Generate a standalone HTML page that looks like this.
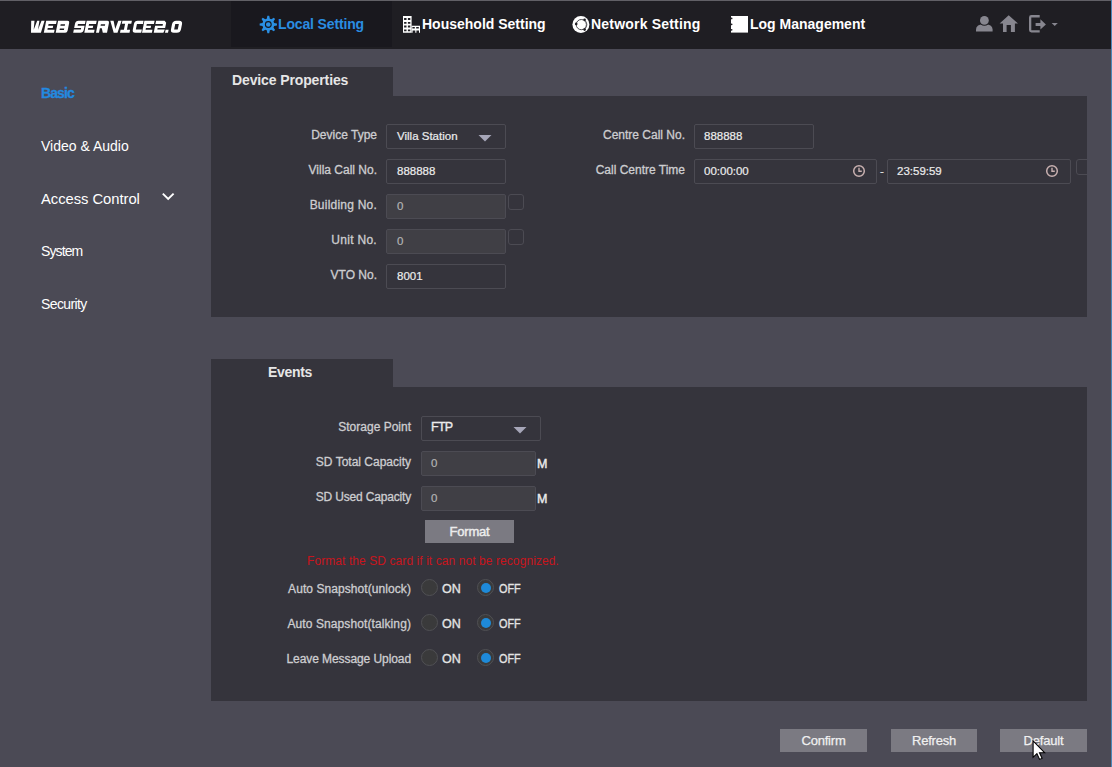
<!DOCTYPE html>
<html><head><meta charset="utf-8">
<style>
*{margin:0;padding:0;box-sizing:border-box;}
html,body{width:1112px;height:767px;overflow:hidden;background:#4b4a55;font-family:"Liberation Sans",sans-serif;}
.a{position:absolute;}
#topline{left:0;top:0;width:1112px;height:1px;background:#616066;}
#rightline{left:1111px;top:0;width:1px;height:767px;background:#4b87b8;}
#hdr{left:0;top:1px;width:1111px;height:48px;background:#1f1e23;}
#act{left:231px;top:1px;width:161px;height:46px;background:#19181e;}
.nav{top:15px;font-size:14px;font-weight:bold;color:#fff;white-space:nowrap;line-height:18px;}
.side{left:41px;font-size:14px;color:#fff;white-space:nowrap;line-height:16px;}
.tab{background:#35343c;}
.card{background:#35343c;}
.ttl{font-size:14px;font-weight:bold;color:#e6e6e6;white-space:nowrap;line-height:16px;}
.lbl{font-size:12px;color:#cdcdd0;white-space:nowrap;text-align:right;line-height:14px;-webkit-text-stroke:0.3px #cdcdd0;}
.inp{border:1px solid #4c4b53;border-radius:2px;background:#35343c;}
.dis{background:#403f45;}
.val{font-size:11.5px;color:#ececec;white-space:nowrap;line-height:14px;-webkit-text-stroke:0.2px #ececec;}
.gval{color:#b4b4b4;-webkit-text-stroke:0.2px #b4b4b4;}
.chk{width:16px;height:16px;border:1px solid #4c4b53;border-radius:3px;}
.btn{background:#7b7a82;color:#f0f0f0;font-size:13px;text-align:center;letter-spacing:-0.2px;-webkit-text-stroke:0.25px #f0f0f0;}
.rad{width:17px;height:17px;border-radius:50%;border:1px solid #505054;background:#3a3a3b;}
.rad.on::after{content:"";position:absolute;left:2.5px;top:2.5px;width:10px;height:10px;border-radius:50%;background:#1e8ad8;}
.rtxt{font-size:12.5px;color:#e4e4e4;line-height:14px;-webkit-text-stroke:0.35px #e4e4e4;}
</style></head><body>
<div class="a" id="hdr"></div>
<div class="a" id="act"></div>
<div class="a" id="topline"></div>
<div class="a" id="rightline"></div>

<!-- logo -->
<svg class="a" style="left:0;top:0;" width="200" height="40"><g fill="#fff" fill-rule="nonzero" transform="matrix(1,0,-0.2,1,2.4,20.7)"><path transform="translate(28.8 0)" d="M0.00 0.00L3.30 0.00L4.30 9.00L6.00 0.00L8.20 0.00L8.60 9.00L10.30 0.00L13.40 0.00L12.10 12.00L2.20 12.00Z"/><path transform="translate(43.8 0)" d="M0.00 0.00H3.00V12.00H0.00ZM0.00 0.00H10.50V3.40H0.00ZM0.00 5.00H8.00V7.30H0.00ZM0.00 9.00H10.20V12.00H0.00Z"/><path transform="translate(55.7 0)" d="M0.00 0.00H9.50Q11.50 0.00 11.50 2.00V10.00Q11.50 12.00 9.50 12.00H0.00V0.00ZM3.30 3.60V5.10H7.70V3.60ZM3.30 7.70V9.20H7.70V7.70Z"/><path transform="translate(73.2 0)" d="M3.00 0.00H10.00V9.00Q10.00 12.00 7.00 12.00H0.00V3.00Q0.00 0.00 3.00 0.00ZM3.00 3.40V5.00H10.00V3.40ZM0.00 7.30V8.90H7.00V7.30Z"/><path transform="translate(84.3 0)" d="M0.00 0.00H3.00V12.00H0.00ZM0.00 0.00H10.00V3.40H0.00ZM0.00 5.00H7.50V7.30H0.00ZM0.00 9.00H9.70V12.00H0.00Z"/><path transform="translate(96 0)" d="M0.00 0.00H9.00Q11.00 0.00 11.00 2.00V12.00H0.00V0.00ZM3.20 3.60V5.10H7.50V3.60ZM3 7.6V12H6.8L4.9 7.6Z"/><path transform="translate(107.9 0)" d="M0.00 0.00L3.30 0.00L6.60 8.20L8.00 0.00L11.30 0.00L9.60 12.00L5.80 12.00Z"/><path transform="translate(120 0)" d="M0.00 0.00H9.50V3.00H0.00ZM3.30 0.00H6.30V12.00H3.30ZM0.00 9.00H9.50V12.00H0.00Z"/><path transform="translate(132.2 0)" d="M3.00 0.00H9.00V12.00H3.00Q0.00 12.00 0.00 9.00V3.00Q0.00 0.00 3.00 0.00ZM3.00 3.20V8.80H9.00V3.20Z"/><path transform="translate(142 0)" d="M0.00 0.00H3.00V12.00H0.00ZM0.00 0.00H10.20V3.40H0.00ZM0.00 5.00H7.70V7.30H0.00ZM0.00 9.00H9.90V12.00H0.00Z"/><path transform="translate(153.7 0)" d="M0.00 0.00L8.50 0.00L10.50 2.00L10.50 8.90L9.70 12.00L0.00 12.00ZM0.00 3.40V5.00H7.50V3.40ZM3.00 7.30V8.90H10.50V7.30Z"/><path transform="translate(165 0)" d="M0.00 9.00H3.00V12.00H0.00Z"/><path transform="translate(170.3 0)" d="M3.50 0.00H6.50Q10.00 0.00 10.00 3.50V8.50Q10.00 12.00 6.50 12.00H3.50Q0.00 12.00 0.00 8.50V3.50Q0.00 0.00 3.50 0.00ZM3.20 3.20V8.80H6.80V3.20Z"/></g></svg>


<!-- header icons -->
<svg class="a" style="left:0;top:0;" width="1112" height="49">
<path d="M266.75 18.70L267.39 15.85L269.21 15.85L269.85 18.70L271.30 19.30L273.78 17.74L275.06 19.02L273.50 21.50L274.10 22.95L276.95 23.59L276.95 25.41L274.10 26.05L273.50 27.50L275.06 29.98L273.78 31.26L271.30 29.70L269.85 30.30L269.21 33.15L267.39 33.15L266.75 30.30L265.30 29.70L262.82 31.26L261.54 29.98L263.10 27.50L262.50 26.05L259.65 25.41L259.65 23.59L262.50 22.95L263.10 21.50L261.54 19.02L262.82 17.74L265.30 19.30Z" fill="#2a8fe4"/>
<circle cx="268.3" cy="24.5" r="2.9" fill="#2a8fe4" stroke="#16161c" stroke-width="1.1"/>
<g fill="#fff">
<path fill-rule="evenodd" d="M403 16H411.6V32.8H403Z M404.1 18.1V19.9H406.5V18.1Z M407.9 18.1V19.9H410.3V18.1Z M404.1 21.9V23.7H406.5V21.9Z M407.9 21.9V23.7H410.3V21.9Z M404.1 25.6V27.4H406.5V25.6Z M407.9 25.6V27.4H410.3V25.6Z M404.1 29.4V31.2H406.5V29.4Z M407.9 29.4V31.2H410.3V29.4Z"/>
<path fill-rule="evenodd" d="M411.6 25.8H420V32.8H419V30.5H416.4V32.8H415.3V30.5H412.6V32.8H411.6Z M412.4 26.9V28.4H414.8V26.9Z M416.2 26.9V28.4H418.8V26.9Z"/>
</g>
<circle cx="580.9" cy="24.4" r="8.5" fill="#fff"/>
<circle cx="581.3" cy="24.6" r="5.1" fill="none" stroke="#3a3a40" stroke-width="0.9"/>
<path d="M584.6 19.7 Q589.2 24.6 584.6 29.6" fill="none" stroke="#55555c" stroke-width="0.8"/>
<circle cx="576.2" cy="23.9" r="1.3" fill="#1f1e23"/>
<circle cx="584.6" cy="19.8" r="1.3" fill="#1f1e23"/>
<circle cx="584.6" cy="29.6" r="1.3" fill="#1f1e23"/>
<path d="M731 16H748V32.6H731Z" fill="#fff"/>
<circle cx="731.6" cy="18.4" r="0.9" fill="#1f1e23"/>
<circle cx="731.6" cy="24.3" r="0.9" fill="#1f1e23"/>
<circle cx="731.6" cy="29.8" r="0.9" fill="#1f1e23"/>
<g fill="#87868f">
<path d="M976 31.4V29.6Q976 24.2 984.3 23.9Q992.6 24.2 992.6 29.6V31.4Z"/>
<circle cx="984.4" cy="20.4" r="5.3" fill="#1f1e23"/>
<circle cx="984.4" cy="20.4" r="4.4"/>
<path d="M1008.7 15.3L1018 23.6H1014.9V32H1010.9V25H1006.6V32H1003V23.6H999.6Z"/>
<path d="M1039.7 15.1H1031.4Q1029 15.1 1029 17.5V30.1Q1029 32.5 1031.4 32.5H1039.7V30.2H1031.3V17.4H1039.7Z"/>
<path d="M1035.6 23.1H1040.4V19.2L1045.9 24.5L1040.4 29.6V26H1035.6Z"/>
<path d="M1051.6 22.9H1057.8L1054.7 26.1Z"/>
</g>
</svg>

<!-- nav -->
<div class="a nav" style="left:278px;color:#2a8de2;letter-spacing:-0.15px;">Local Setting</div>
<div class="a nav" style="left:422px;">Household Setting</div>
<div class="a nav" style="left:591px;letter-spacing:0.2px;">Network Setting</div>
<div class="a nav" style="left:750px;">Log Management</div>

<!-- sidebar -->
<div class="a side" style="top:85px;font-weight:bold;font-size:14px;letter-spacing:-0.9px;color:#2389e0;-webkit-text-stroke:0.3px #2389e0;">Basic</div>
<div class="a side" style="top:138px;">Video &amp; Audio</div>
<div class="a side" style="top:191px;font-size:14.8px;letter-spacing:-0.05px;">Access Control</div>
<svg class="a" style="left:160px;top:190px;" width="16" height="12"><path d="M2.8 3.6 L8.2 9 L13.6 3.6" fill="none" stroke="#fff" stroke-width="1.9"/></svg>
<div class="a side" style="top:243px;letter-spacing:-0.9px;">System</div>
<div class="a side" style="top:296px;letter-spacing:-0.6px;">Security</div>

<!-- card 1 -->
<div class="a tab" style="left:211px;top:67px;width:182px;height:29px;"></div>
<div class="a card" style="left:211px;top:96px;width:876px;height:221px;"></div>
<div class="a ttl" style="left:232px;top:72px;letter-spacing:-0.12px;">Device Properties</div>

<!-- card 2 -->
<div class="a tab" style="left:211px;top:359px;width:182px;height:28px;"></div>
<div class="a card" style="left:211px;top:387px;width:876px;height:314px;"></div>
<div class="a ttl" style="left:268px;top:364px;letter-spacing:-0.3px;">Events</div>


<!-- card1 form -->
<div class="a lbl" style="left:277px;width:100px;top:128px;">Device Type</div>
<div class="a inp" style="left:386px;top:124px;width:120px;height:25px;"></div>
<div class="a val" style="left:397px;top:129px;">Villa Station</div>
<svg class="a" style="left:478px;top:134px;" width="14" height="8"><path d="M0.5 1 L13.5 1 L7 7.5 Z" fill="#a6a6b8"/></svg>

<div class="a lbl" style="left:277px;width:100px;top:163px;">Villa Call No.</div>
<div class="a inp" style="left:386px;top:159px;width:120px;height:25px;"></div>
<div class="a val" style="left:397px;top:164px;">888888</div>

<div class="a lbl" style="left:277px;width:100px;top:198px;letter-spacing:0.22px;">Building No.</div>
<div class="a inp dis" style="left:386px;top:194px;width:120px;height:25px;"></div>
<div class="a val gval" style="left:397px;top:199px;">0</div>
<div class="a chk" style="left:508px;top:194px;"></div>

<div class="a lbl" style="left:277px;width:100px;top:233px;letter-spacing:0.3px;">Unit No.</div>
<div class="a inp dis" style="left:386px;top:229px;width:120px;height:25px;"></div>
<div class="a val gval" style="left:397px;top:234px;">0</div>
<div class="a chk" style="left:508px;top:229px;"></div>

<div class="a lbl" style="left:277px;width:100px;top:268px;">VTO No.</div>
<div class="a inp" style="left:386px;top:264px;width:120px;height:25px;"></div>
<div class="a val" style="left:397px;top:269px;">8001</div>

<div class="a lbl" style="left:565px;width:120px;top:128px;">Centre Call No.</div>
<div class="a inp" style="left:694px;top:124px;width:120px;height:25px;"></div>
<div class="a val" style="left:704px;top:129px;">888888</div>

<div class="a lbl" style="left:565px;width:120px;top:163px;">Call Centre Time</div>
<div class="a inp" style="left:694px;top:159px;width:183px;height:25px;"></div>
<div class="a val" style="left:704px;top:164px;">00:00:00</div>
<svg class="a" style="left:852px;top:164px;" width="14" height="14"><circle cx="7" cy="7" r="5.3" fill="none" stroke="#c8b0b0" stroke-width="1.5"/><path d="M7 3.8 V7.3 H9.8" fill="none" stroke="#c8b0b0" stroke-width="1.4"/></svg>
<div class="a val" style="left:880px;top:164px;color:#ccc;">-</div>
<div class="a inp" style="left:887px;top:159px;width:184px;height:25px;"></div>
<div class="a val" style="left:897px;top:164px;">23:59:59</div>
<svg class="a" style="left:1045px;top:164px;" width="14" height="14"><circle cx="7" cy="7" r="5.3" fill="none" stroke="#c8b0b0" stroke-width="1.5"/><path d="M7 3.8 V7.3 H9.8" fill="none" stroke="#c8b0b0" stroke-width="1.4"/></svg>
<div class="a" style="left:1076px;top:159px;width:11px;height:16px;overflow:hidden;"><div class="a chk" style="left:0;top:0;"></div></div>

<!-- card2 form -->
<div class="a lbl" style="left:291px;width:120px;top:420px;">Storage Point</div>
<div class="a inp" style="left:421px;top:416px;width:120px;height:25px;"></div>
<div class="a val" style="left:431px;top:420px;font-size:12.5px;letter-spacing:-0.7px;-webkit-text-stroke:0.35px #ececec;">FTP</div>
<svg class="a" style="left:513px;top:426px;" width="14" height="8"><path d="M0.5 1 L13.5 1 L7 7.5 Z" fill="#a6a6b8"/></svg>

<div class="a lbl" style="left:291px;width:120px;top:455px;">SD Total Capacity</div>
<div class="a inp dis" style="left:421px;top:451px;width:115px;height:25px;"></div>
<div class="a val gval" style="left:431px;top:456px;">0</div>
<div class="a val" style="left:537px;top:457px;font-size:12.5px;-webkit-text-stroke:0.4px #ececec;">M</div>

<div class="a lbl" style="left:291px;width:120px;top:490px;letter-spacing:-0.17px;">SD Used Capacity</div>
<div class="a inp dis" style="left:421px;top:486px;width:115px;height:25px;"></div>
<div class="a val gval" style="left:431px;top:491px;">0</div>
<div class="a val" style="left:537px;top:492px;font-size:12.5px;-webkit-text-stroke:0.4px #ececec;">M</div>

<div class="a btn" style="left:425px;top:520px;width:89px;height:23px;line-height:23px;letter-spacing:-0.2px;-webkit-text-stroke:0.45px #ececec;color:#ececec;">Format</div>
<div class="a" style="left:307px;top:554px;font-size:12px;letter-spacing:0.08px;color:#c8141c;white-space:nowrap;line-height:14px;">Format the SD card if it can not be recognized.</div>

<div class="a lbl" style="left:211px;width:200px;top:582px;letter-spacing:0.07px;">Auto Snapshot(unlock)</div>
<div class="a rad" style="left:421px;top:579px;"></div><div class="a rtxt" style="left:442px;top:582px;">ON</div>
<div class="a rad on" style="left:477px;top:579px;"></div><div class="a rtxt" style="left:499px;top:582px;transform:scaleX(0.87);transform-origin:0 0;">OFF</div>

<div class="a lbl" style="left:211px;width:200px;top:617px;letter-spacing:0.1px;">Auto Snapshot(talking)</div>
<div class="a rad" style="left:421px;top:614px;"></div><div class="a rtxt" style="left:442px;top:617px;">ON</div>
<div class="a rad on" style="left:477px;top:614px;"></div><div class="a rtxt" style="left:499px;top:617px;transform:scaleX(0.87);transform-origin:0 0;">OFF</div>

<div class="a lbl" style="left:211px;width:200px;top:652px;letter-spacing:-0.08px;">Leave Message Upload</div>
<div class="a rad" style="left:421px;top:649px;"></div><div class="a rtxt" style="left:442px;top:652px;">ON</div>
<div class="a rad on" style="left:477px;top:649px;"></div><div class="a rtxt" style="left:499px;top:652px;transform:scaleX(0.87);transform-origin:0 0;">OFF</div>

<!-- buttons -->
<div class="a btn" style="left:780px;top:729px;width:87px;height:23px;line-height:23px;">Confirm</div>
<div class="a btn" style="left:891px;top:729px;width:86px;height:23px;line-height:23px;">Refresh</div>
<div class="a btn" style="left:1000px;top:729px;width:87px;height:23px;line-height:23px;">Default</div>
<svg class="a" style="left:1032px;top:740px;" width="16" height="22"><path d="M1.1 0.9 V17.3 L4.9 13.6 L7.6 19.4 L10.1 18.3 L7.5 12.7 L12.6 12.7 Z" fill="#fff" stroke="#000" stroke-width="1.1" stroke-linejoin="miter"/></svg>
</body></html>
